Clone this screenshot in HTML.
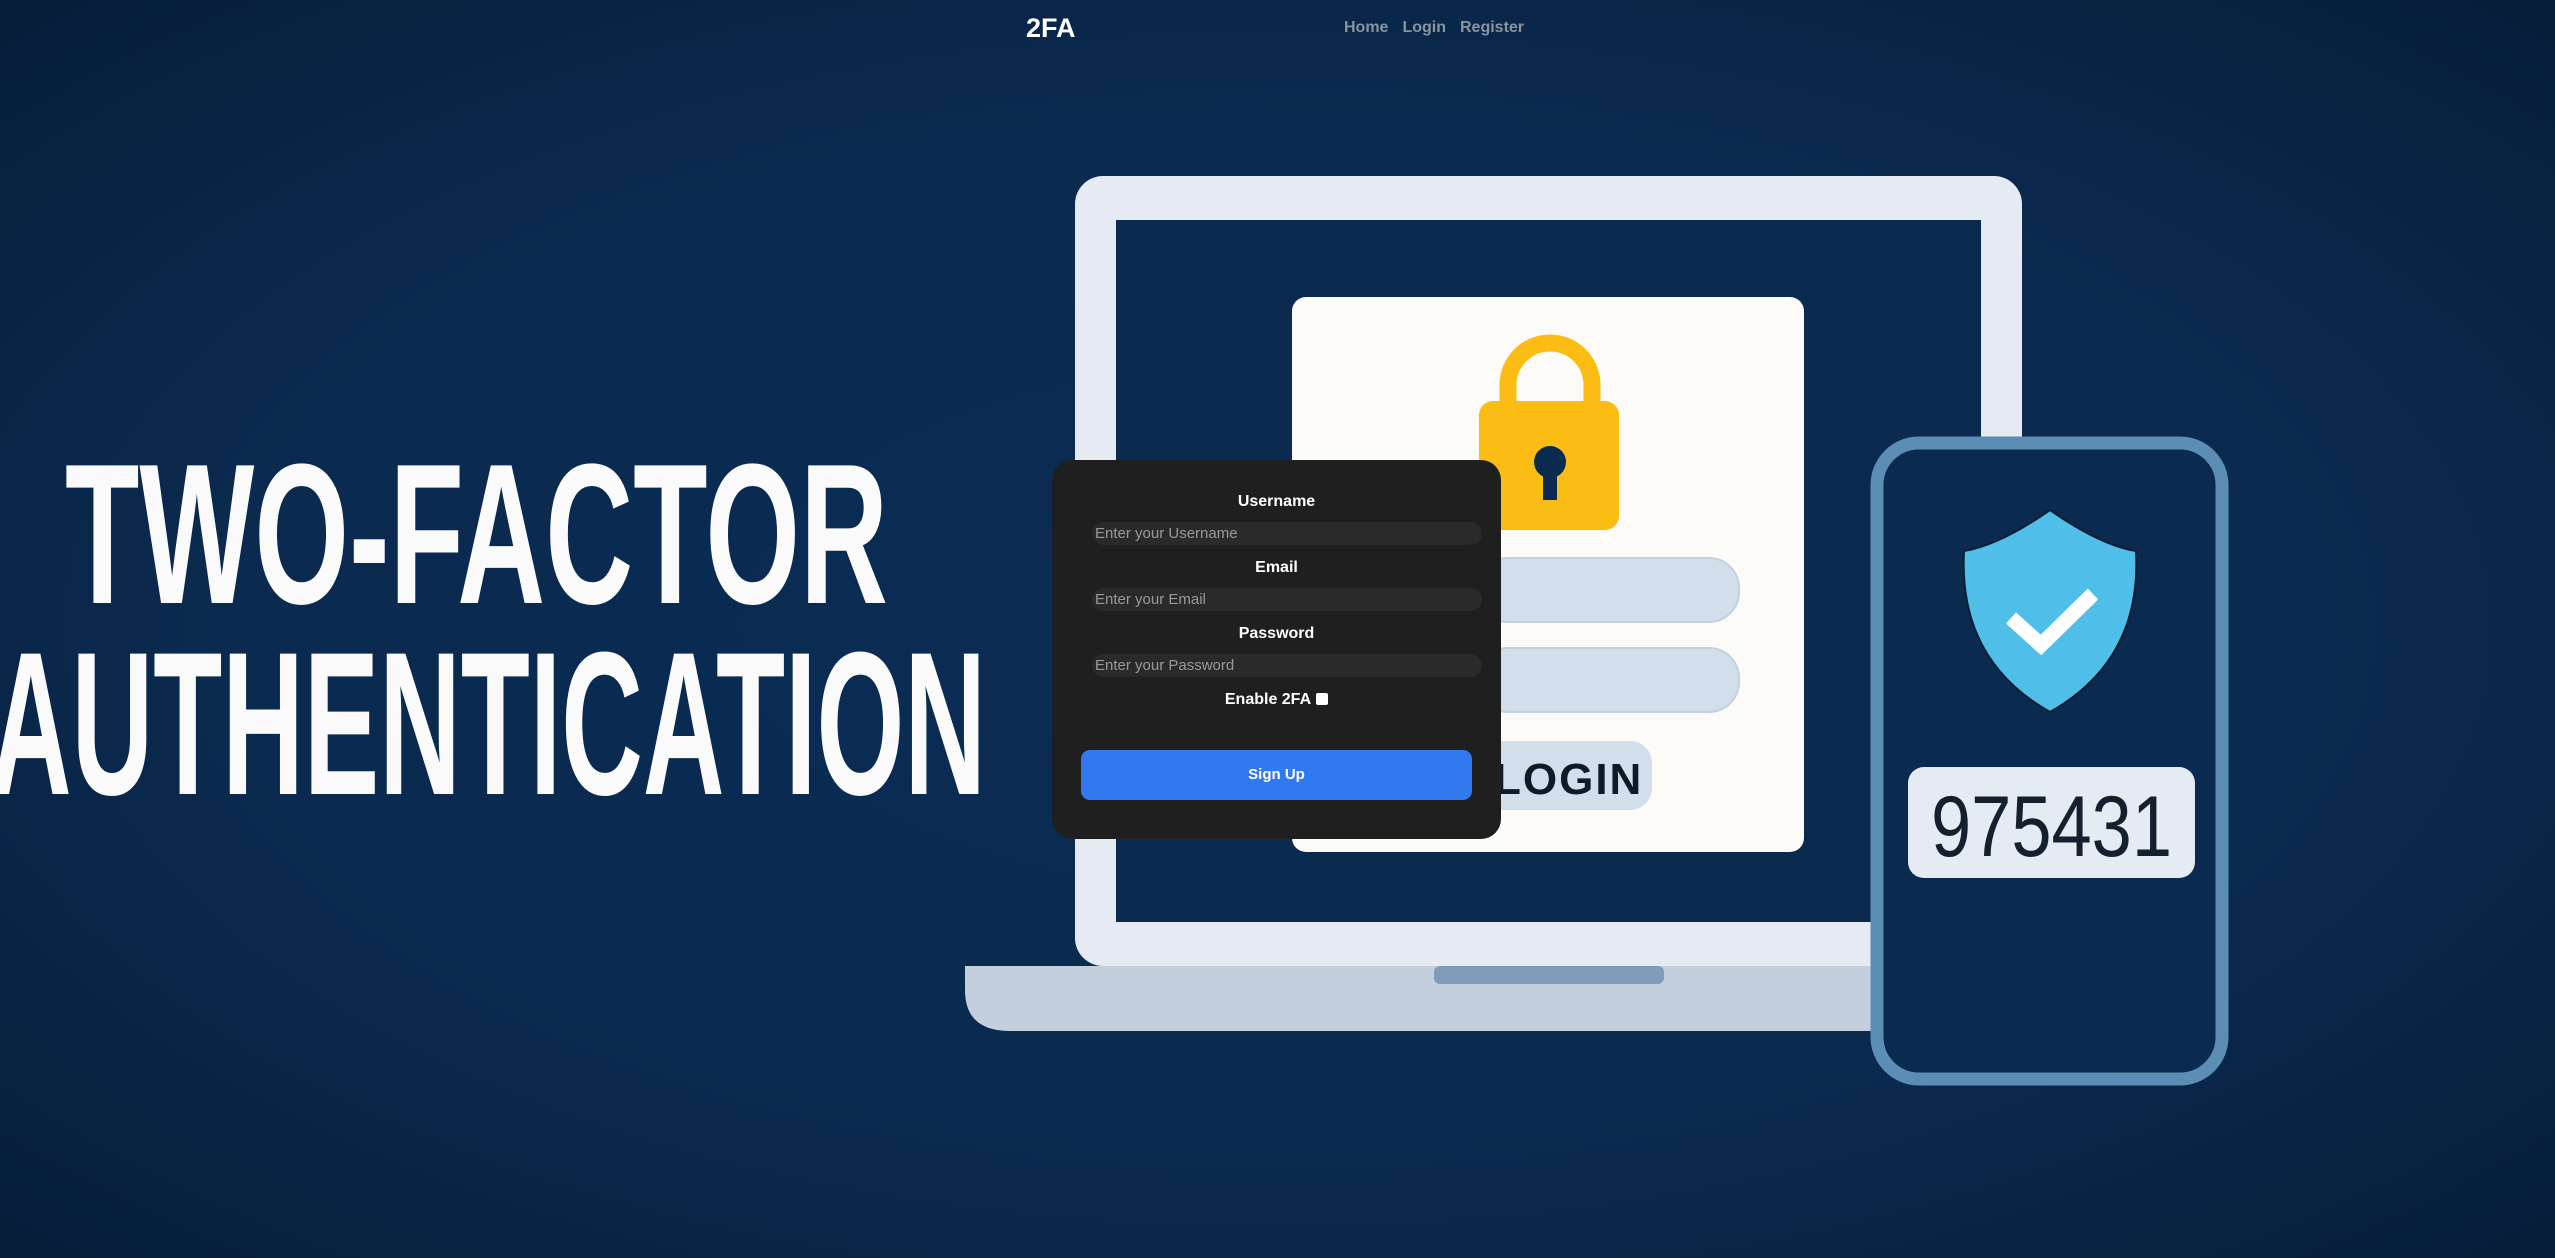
<!DOCTYPE html>
<html><head><meta charset="utf-8"><style>
html,body{margin:0;padding:0;width:2555px;height:1258px;overflow:hidden;}
body{background:radial-gradient(ellipse 75% 75% at 50% 50%,#0b2c54 0%,#0a2a4f 55%,#071f3c 90%,#061a33 100%);font-family:"Liberation Sans","DejaVu Sans",sans-serif;position:relative;}
svg.bg{position:absolute;left:0;top:0;}
.logo{position:absolute;left:1026px;top:13px;color:#fff;font-size:27px;font-weight:bold;}
.nav{position:absolute;left:1344px;top:19px;font-size:16px;font-weight:bold;color:#8a939e;}
.nav span{margin-right:14px;}
.form{position:absolute;left:1052px;top:460px;width:449px;height:379px;background:#1f1f1f;border-radius:20px;color:#fff;}
.lbl{position:absolute;left:0;width:100%;text-align:center;font-weight:bold;font-size:16px;}
.inp{position:absolute;left:40px;width:390px;height:23px;background:#2a2a2a;border-radius:12px;color:#9a9a9a;font-size:15px;line-height:23px;padding-left:3px;box-sizing:border-box;}
.btn{position:absolute;left:29px;top:290px;width:391px;height:50px;background:#3179f0;border-radius:9px;text-align:center;line-height:50px;font-weight:bold;font-size:15px;}
.cb{display:inline-block;width:12px;height:12px;background:#fff;border-radius:2px;margin-left:5px;vertical-align:-1px;}
</style></head><body>
<svg class="bg" width="2555" height="1258" viewBox="0 0 2555 1258">
 <text x="65" y="603" font-family="Liberation Sans Narrow, Liberation Sans, sans-serif" font-weight="bold" font-size="200" fill="#fafafa" textLength="823" lengthAdjust="spacingAndGlyphs">TWO-FACTOR</text>
 <text x="-10" y="794" font-family="Liberation Sans Narrow, Liberation Sans, sans-serif" font-weight="bold" font-size="204" fill="#fafafa" textLength="996" lengthAdjust="spacingAndGlyphs">AUTHENTICATION</text>
 <!-- laptop base -->
 <path d="M965 966 H1907 V1031 H1010 Q965 1031 965 990 Z" fill="#c3cfdc"/>
 <rect x="1434" y="966" width="230" height="18" rx="6" fill="#7e9bb9"/>
 <!-- laptop frame -->
 <rect x="1075" y="176" width="947" height="790" rx="28" fill="#e6ebf3"/>
 <rect x="1116" y="220" width="865" height="702" fill="#0a2a50"/>
 <!-- card -->
 <rect x="1292" y="297" width="512" height="555" rx="14" fill="#fcfbf8"/>
 <rect x="1478" y="558" width="261" height="64" rx="30" fill="#d2dee9" stroke="#c1d1e1" stroke-width="2"/>
 <rect x="1478" y="648" width="261" height="64" rx="30" fill="#d2dee9" stroke="#c1d1e1" stroke-width="2"/>
 <rect x="1478" y="741" width="174" height="69" rx="22" fill="#d2dee9"/>
 <text x="1494" y="794" font-family="Liberation Sans, sans-serif" font-weight="bold" font-size="44" fill="#0f1a26" letter-spacing="2">LOGIN</text>
 <!-- lock -->
 <path d="M1508 405 V385 A42 42 0 0 1 1592 385 V405" fill="none" stroke="#fbbc14" stroke-width="17"/>
 <rect x="1479" y="401" width="140" height="129" rx="14" fill="#fbbc14"/>
 <circle cx="1550" cy="462" r="16" fill="#0a2a50"/>
 <rect x="1543" y="468" width="14" height="32" fill="#0a2a50"/>
 <!-- phone -->
 <rect x="1877" y="443" width="345" height="636" rx="42" fill="#0a2a50" stroke="#5b8db5" stroke-width="13"/>
 <path d="M2050 510 Q2000 545 1964 551 Q1958 660 2050 712 Q2142 660 2136 551 Q2100 545 2050 510 Z" fill="#4fbfe9" stroke="#0a1d33" stroke-width="2"/>
 <path d="M2011 618 L2041 645 L2093 594" fill="none" stroke="#fff" stroke-width="15"/>
 <rect x="1908" y="767" width="287" height="111" rx="16" fill="#e5ebf3"/>
 <text x="1931" y="856" font-family="Liberation Sans, sans-serif" font-size="86" fill="#15202e" textLength="241" lengthAdjust="spacingAndGlyphs">975431</text>
</svg>
<div class="logo">2FA</div>
<div class="nav"><span>Home</span><span>Login</span><span>Register</span></div>
<div class="form">
 <div class="lbl" style="top:33px">Username</div>
 <div class="inp" style="top:62px">Enter your Username</div>
 <div class="lbl" style="top:99px">Email</div>
 <div class="inp" style="top:128px">Enter your Email</div>
 <div class="lbl" style="top:165px">Password</div>
 <div class="inp" style="top:194px">Enter your Password</div>
 <div class="lbl" style="top:231px">Enable 2FA<span class="cb"></span></div>
 <div class="btn">Sign Up</div>
</div>
</body></html>
